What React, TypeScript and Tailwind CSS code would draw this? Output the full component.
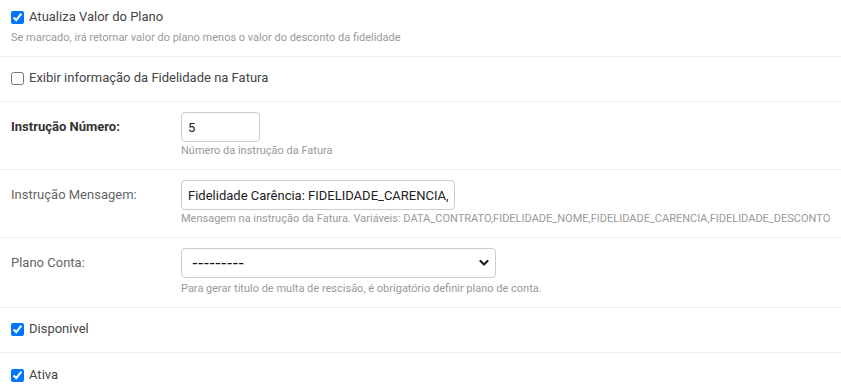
import React from 'react';

const font = { fontFamily: 'Roboto, "Liberation Sans", sans-serif' };

function CheckRow({ label, checked, pt, pb, last }: { label: string; checked?: boolean; pt: string; pb: string; last?: boolean }) {
  return (
    <div className={`pl-[11px] ${pt} ${pb} ${last ? '' : 'border-b border-[#eeeeee]'}`}>
      <label className="flex items-center gap-[5px] h-[18px] text-[13px] text-[#444]">
        <input type="checkbox" defaultChecked={checked} className="m-0 w-[13px] h-[13px]" />
        <span>{label}</span>
      </label>
    </div>
  );
}

function FieldRow({
  label,
  bold,
  help,
  helpGap,
  children,
}: {
  label: string;
  bold?: boolean;
  help: string;
  helpGap: string;
  children: React.ReactNode;
}) {
  return (
    <div className="border-b border-[#eeeeee] pl-[11px] pr-[10px] pt-[10px] pb-[10px]">
      <div className="flex items-center">
        <div className={`w-[170px] text-[13px] ${bold ? 'font-bold text-[#333]' : 'text-[#666]'}`}>{label}</div>
        {children}
      </div>
      <div className={`ml-[170px] ${helpGap} text-[11px] leading-[16px] text-[#999] whitespace-nowrap`}>{help}</div>
    </div>
  );
}

export default function App() {
  return (
    <div className="w-[841px] h-[390px] bg-white overflow-hidden" style={font}>
      <div className="pt-[8px] pb-[10px] border-b border-[#eeeeee] pl-[11px]">
        <label className="flex items-center gap-[5px] h-[18px] text-[13px] text-[#444]">
          <input type="checkbox" defaultChecked className="m-0 w-[13px] h-[13px]" />
          <span>Atualiza Valor do Plano</span>
        </label>
        <div className="mt-[4px] text-[11px] leading-[16px] text-[#999]">
          Se marcado, irá retornar valor do plano menos o valor do desconto da fidelidade
        </div>
      </div>

      <CheckRow label="Exibir informação da Fidelidade na Fatura" pt="pt-[12px]" pb="pb-[14px]" />

      <FieldRow label="Instrução Número:" bold help="Número da instrução da Fatura" helpGap="mt-[1px]">
        <input
          type="text"
          defaultValue="5"
          className="w-[79px] h-[30px] border border-[#ccc] rounded-[4px] px-[6px] text-[13px] text-[#222] outline-none"
          style={font}
        />
      </FieldRow>

      <FieldRow
        label="Instrução Mensagem:"
        help="Mensagem na instrução da Fatura. Variáveis: DATA_CONTRATO,FIDELIDADE_NOME,FIDELIDADE_CARENCIA,FIDELIDADE_DESCONTO"
        helpGap="mt-[1px]"
      >
        <input
          type="text"
          defaultValue="Fidelidade Carência: FIDELIDADE_CARENCIA, Desconto: FIDELIDADE_DESCONTO"
          className="w-[274px] h-[30px] border border-[#ccc] rounded-[4px] pl-[6px] pr-[2px] text-[13px] text-[#222] outline-none"
          style={font}
        />
      </FieldRow>

      <FieldRow
        label="Plano Conta:"
        help="Para gerar titulo de multa de rescisão, é obrigatório definir plano de conta."
        helpGap="mt-[3px]"
      >
        <div className="relative w-[315px] h-[30px]">
          <select
            className="appearance-none w-full h-full border border-[#ccc] rounded-[4px] pl-[10px] pr-[24px] text-[16px] text-[#111] bg-white outline-none"
            style={{ fontFamily: '"DejaVu Sans", sans-serif' }}
          >
            <option>---------</option>
          </select>
          <svg
            className="absolute right-[7px] top-[11px] pointer-events-none"
            width="10"
            height="8"
            viewBox="0 0 10 8"
          >
            <path d="M1.5 2 L5 5.5 L8.5 2" fill="none" stroke="#222" strokeWidth="2.2" strokeLinecap="round" strokeLinejoin="round" />
          </svg>
        </div>
      </FieldRow>

      <CheckRow label="Disponivel" checked pt="pt-[12px]" pb="pb-[14px]" />
      <CheckRow label="Ativa" checked pt="pt-[13px]" pb="pb-[14px]" last />
    </div>
  );
}
